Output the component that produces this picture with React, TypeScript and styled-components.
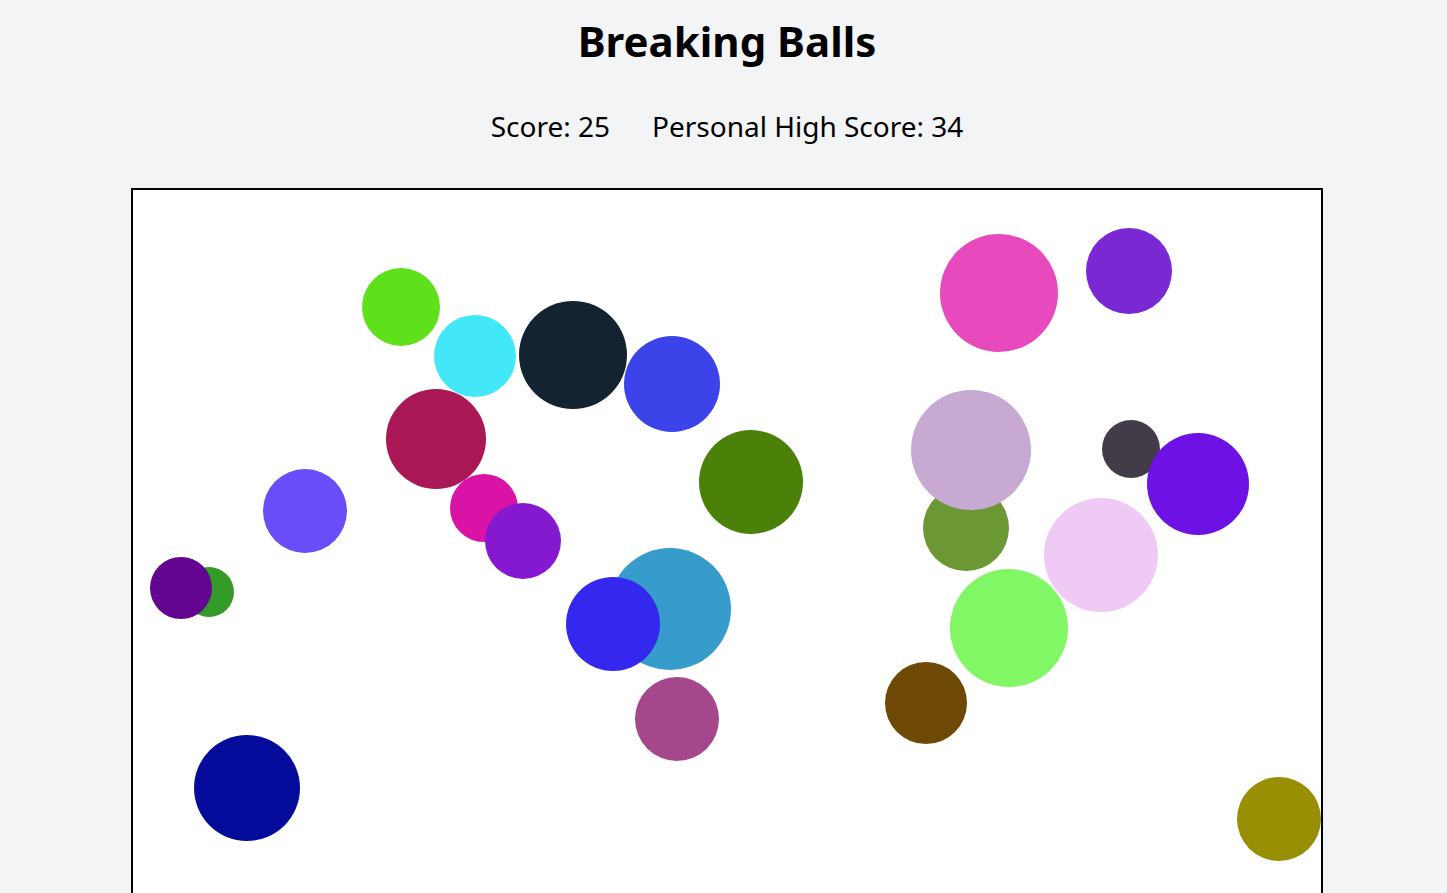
import React from "react";
import styled, { createGlobalStyle } from "styled-components";

const GlobalStyle = createGlobalStyle`
  html, body {
    margin: 0;
    padding: 0;
    background: #f3f4f6;
    font-family: "Noto Sans", "Open Sans", sans-serif;
    color: #000;
  }
`;

const Page = styled.div`
  display: flex;
  flex-direction: column;
  align-items: center;
  padding: 12px 0 0 7px;
`;

const Title = styled.h1`
  margin: 0;
  font-size: 42px;
  line-height: 58px;
  font-weight: 700;
`;

const ScoreRow = styled.div`
  display: flex;
  gap: 42px;
  margin-top: 37px;
  font-size: 28px;
  line-height: 38px;
`;

const Board = styled.div`
  margin-top: 43px;
  width: 1188px;
  height: 800px;
  border: 2px solid #000;
  background: #fff;
  overflow: hidden;
  flex-shrink: 0;
`;

const BallLayer = styled.svg`
  display: block;
  width: 100%;
  height: 100%;
`;

type Ball = { x: number; y: number; r: number; c: string };

const balls: Ball[] = [
  { x: 401, y: 307, r: 39, c: "#5ee01a" },
  { x: 475, y: 356, r: 41, c: "#43e8f8" },
  { x: 573, y: 355, r: 54, c: "#132330" },
  { x: 672, y: 384, r: 48, c: "#3c43e8" },
  { x: 436, y: 439, r: 50, c: "#a91755" },
  { x: 751, y: 482, r: 52, c: "#4c8109" },
  { x: 305, y: 511, r: 42, c: "#6a4cf8" },
  { x: 484, y: 508, r: 34, c: "#db12a6" },
  { x: 523, y: 541, r: 38, c: "#8419cf" },
  { x: 209, y: 592, r: 25, c: "#339a27" },
  { x: 181, y: 588, r: 31, c: "#630590" },
  { x: 670, y: 609, r: 61, c: "#359ccb" },
  { x: 613, y: 624, r: 47, c: "#3428ee" },
  { x: 677, y: 719, r: 42, c: "#a5478b" },
  { x: 247, y: 788, r: 53, c: "#050c9c" },
  { x: 999, y: 293, r: 59, c: "#e64abc" },
  { x: 1129, y: 271, r: 43, c: "#7a27d4" },
  { x: 966, y: 528, r: 43, c: "#6b9835" },
  { x: 971, y: 450, r: 60, c: "#c8a9d1" },
  { x: 1131, y: 449, r: 29, c: "#433c48" },
  { x: 1198, y: 484, r: 51, c: "#6d11e5" },
  { x: 1101, y: 555, r: 57, c: "#efcaf4" },
  { x: 1009, y: 628, r: 59, c: "#82f766" },
  { x: 926, y: 703, r: 41, c: "#6e4805" },
  { x: 1279, y: 819, r: 42, c: "#988f04" },
];

export default function App() {
  return (
    <>
      <GlobalStyle />
      <Page>
        <Title>Breaking Balls</Title>
        <ScoreRow>
          <span>Score: 25</span>
          <span>Personal High Score: 34</span>
        </ScoreRow>
        <Board>
          <BallLayer viewBox="0 0 1188 800">
            {balls.map((b, i) => (
              <circle key={i} cx={b.x - 133} cy={b.y - 190} r={b.r} fill={b.c} />
            ))}
          </BallLayer>
        </Board>
      </Page>
    </>
  );
}
